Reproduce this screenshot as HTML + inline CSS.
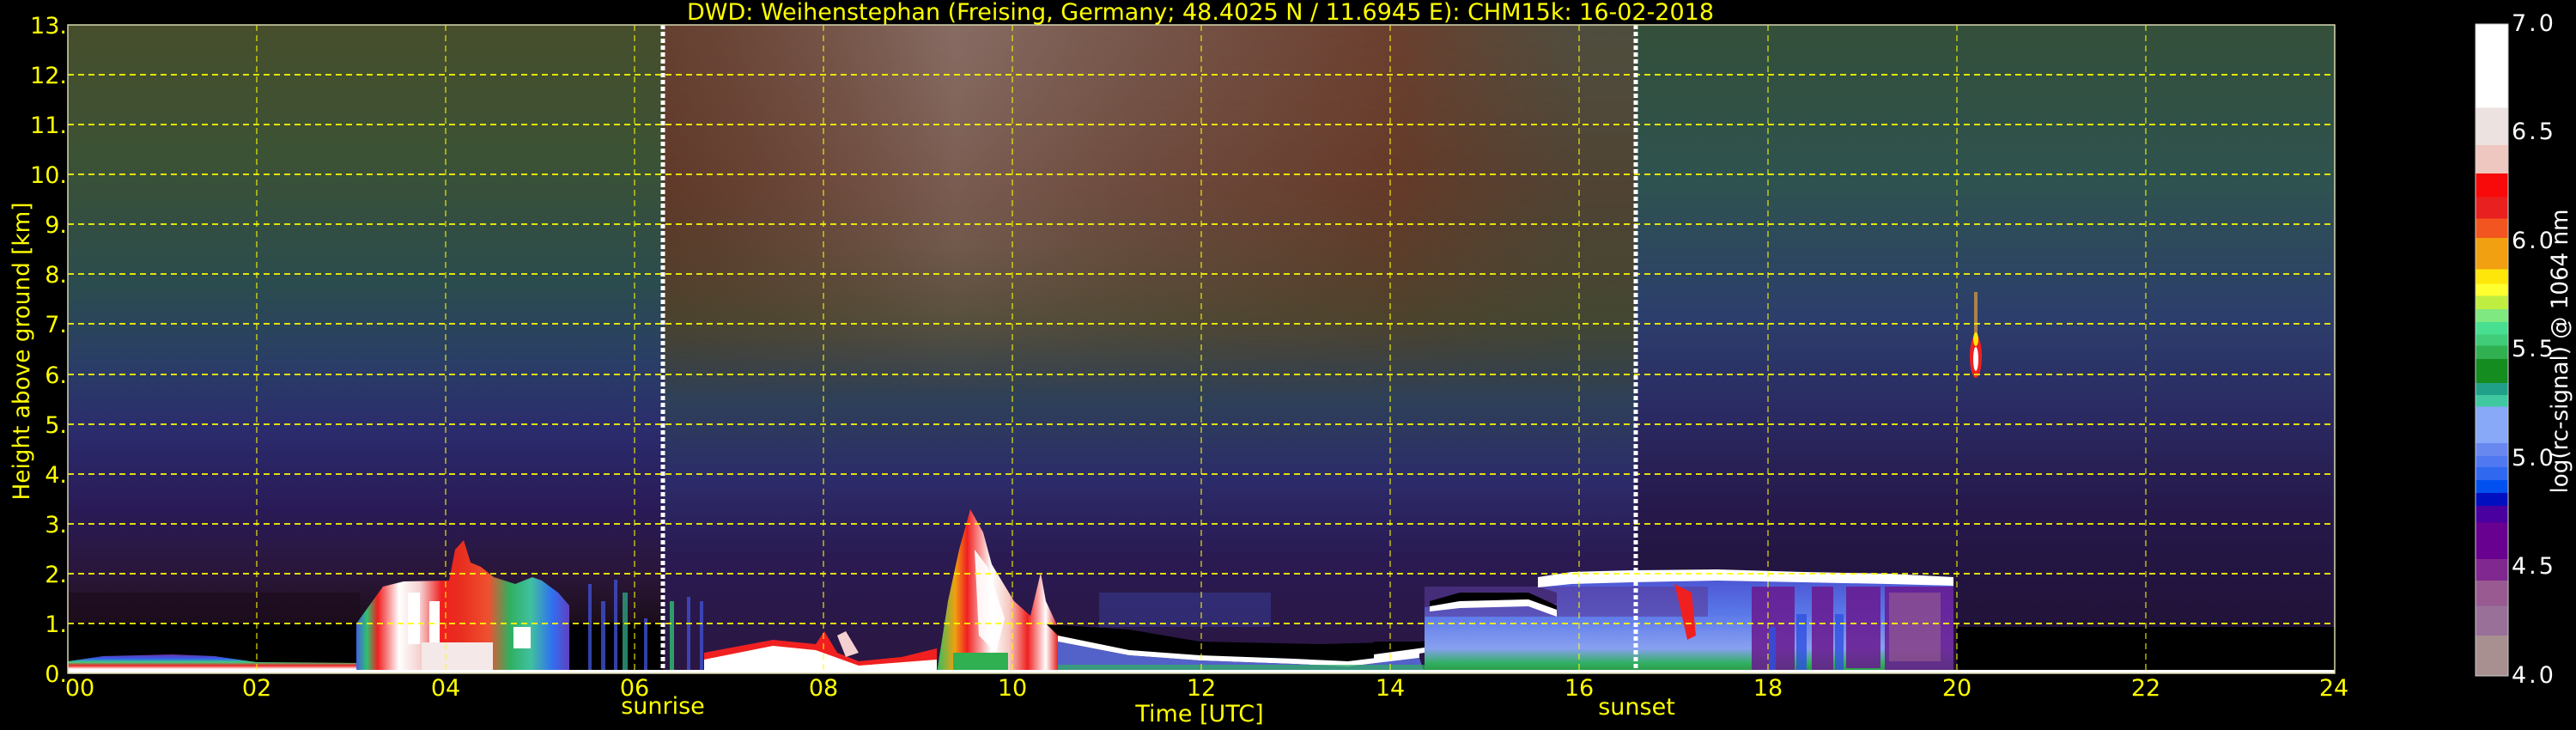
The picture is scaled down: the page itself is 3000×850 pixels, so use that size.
<!DOCTYPE html>
<html><head><meta charset="utf-8"><style>
html,body{margin:0;padding:0;background:#000;}
svg{display:block;}
text{font-family:"DejaVu Sans","Liberation Sans",sans-serif;}
</style></head><body>
<svg width="3000" height="850" viewBox="0 0 3000 850" xmlns="http://www.w3.org/2000/svg">
<defs>
<linearGradient id="gL" x1="0" y1="29" x2="0" y2="784" gradientUnits="userSpaceOnUse">
<stop offset="0" stop-color="#464e2c"/><stop offset="0.2" stop-color="#3c5234"/><stop offset="0.4" stop-color="#2b4c4e"/>
<stop offset="0.52" stop-color="#2a3e66"/><stop offset="0.63" stop-color="#2b2b6c"/><stop offset="0.75" stop-color="#291a56"/>
<stop offset="0.85" stop-color="#2a1638"/><stop offset="0.92" stop-color="#1c0e1c"/><stop offset="0.925" stop-color="#000"/><stop offset="1" stop-color="#000"/>
</linearGradient>
<linearGradient id="gM" x1="0" y1="29" x2="0" y2="784" gradientUnits="userSpaceOnUse">
<stop offset="0" stop-color="#6e4a3c"/><stop offset="0.25" stop-color="#603a2a"/><stop offset="0.45" stop-color="#46452e"/>
<stop offset="0.58" stop-color="#2e4058"/><stop offset="0.7" stop-color="#2c2c6a"/><stop offset="0.82" stop-color="#2a1a52"/><stop offset="1" stop-color="#2a1640"/>
</linearGradient>
<linearGradient id="gMh" x1="772" y1="0" x2="1905" y2="0" gradientUnits="userSpaceOnUse">
<stop offset="0" stop-color="#603828" stop-opacity="0.6"/><stop offset="0.3" stop-color="#8a7068" stop-opacity="0.9"/>
<stop offset="0.5" stop-color="#7a5a50" stop-opacity="0.7"/><stop offset="0.75" stop-color="#6a3a28" stop-opacity="0.7"/>
<stop offset="0.95" stop-color="#3a5040" stop-opacity="0.6"/><stop offset="1" stop-color="#3a5040" stop-opacity="0.6"/>
</linearGradient>
<linearGradient id="fade" x1="0" y1="0" x2="0" y2="1"><stop offset="0" stop-color="#fff"/><stop offset="0.6" stop-color="#fff" stop-opacity="0.6"/><stop offset="1" stop-color="#fff" stop-opacity="0"/></linearGradient>
<mask id="mk"><rect x="772" y="29" width="1133" height="430" fill="url(#fade)"/></mask>
<linearGradient id="gR" x1="0" y1="29" x2="0" y2="784" gradientUnits="userSpaceOnUse">
<stop offset="0" stop-color="#34503a"/><stop offset="0.25" stop-color="#2e5250"/><stop offset="0.45" stop-color="#2c3e6c"/>
<stop offset="0.6" stop-color="#2a2a62"/><stop offset="0.75" stop-color="#26184a"/><stop offset="1" stop-color="#1e1030"/>
</linearGradient>
<linearGradient id="low" x1="0" y1="0" x2="0" y2="1">
<stop offset="0" stop-color="#7030a0"/><stop offset="0.25" stop-color="#3060f0"/><stop offset="0.45" stop-color="#40d080"/><stop offset="0.65" stop-color="#f02020"/><stop offset="0.85" stop-color="#fff"/><stop offset="1" stop-color="#fff"/>
</linearGradient>
<linearGradient id="aer" x1="0" y1="0" x2="1" y2="0">
<stop offset="0" stop-color="#4060e0"/><stop offset="0.05" stop-color="#30c070"/><stop offset="0.1" stop-color="#f02020"/>
<stop offset="0.2" stop-color="#fff"/><stop offset="0.3" stop-color="#f5d0d0"/><stop offset="0.4" stop-color="#f02020"/>
<stop offset="0.5" stop-color="#e83020"/><stop offset="0.62" stop-color="#f05030"/><stop offset="0.72" stop-color="#30b060"/>
<stop offset="0.82" stop-color="#40c0a0"/><stop offset="0.92" stop-color="#3070f0"/><stop offset="1" stop-color="#6040c0"/>
</linearGradient>
<linearGradient id="plume" x1="0" y1="0" x2="1" y2="0">
<stop offset="0" stop-color="#30c060"/><stop offset="0.15" stop-color="#f0a010"/><stop offset="0.25" stop-color="#f02020"/>
<stop offset="0.45" stop-color="#fff"/><stop offset="0.6" stop-color="#f5c8c0"/><stop offset="0.75" stop-color="#f02020"/><stop offset="0.9" stop-color="#fff"/><stop offset="1" stop-color="#e82020"/>
</linearGradient>
<linearGradient id="blu" x1="0" y1="0" x2="0" y2="1">
<stop offset="0" stop-color="#4a50d0"/><stop offset="0.4" stop-color="#5a78e8"/><stop offset="0.75" stop-color="#88a0f0"/><stop offset="0.9" stop-color="#30b060"/><stop offset="1" stop-color="#2a9040"/>
</linearGradient>
<linearGradient id="cb" x1="0" y1="0" x2="0" y2="1">
<stop offset="0" stop-color="#fff"/><stop offset="0.1286" stop-color="#fff"/>
<stop offset="0.1286" stop-color="#ece2e0"/><stop offset="0.1857" stop-color="#ece2e0"/>
<stop offset="0.1857" stop-color="#eec8c0"/><stop offset="0.2293" stop-color="#eec8c0"/>
<stop offset="0.2293" stop-color="#f80a0a"/><stop offset="0.2657" stop-color="#f80a0a"/>
<stop offset="0.2657" stop-color="#e82020"/><stop offset="0.2986" stop-color="#e82020"/>
<stop offset="0.2986" stop-color="#f25520"/><stop offset="0.3279" stop-color="#f25520"/>
<stop offset="0.3279" stop-color="#f0a010"/><stop offset="0.3764" stop-color="#f0a010"/>
<stop offset="0.3764" stop-color="#ffe60a"/><stop offset="0.3986" stop-color="#ffe60a"/>
<stop offset="0.3986" stop-color="#ffff30"/><stop offset="0.4171" stop-color="#ffff30"/>
<stop offset="0.4171" stop-color="#c0ee40"/><stop offset="0.4371" stop-color="#c0ee40"/>
<stop offset="0.4371" stop-color="#80e880"/><stop offset="0.4571" stop-color="#80e880"/>
<stop offset="0.4571" stop-color="#48e090"/><stop offset="0.4764" stop-color="#48e090"/>
<stop offset="0.4764" stop-color="#40cc78"/><stop offset="0.4936" stop-color="#40cc78"/>
<stop offset="0.4936" stop-color="#30b050"/><stop offset="0.5136" stop-color="#30b050"/>
<stop offset="0.5136" stop-color="#158c20"/><stop offset="0.5507" stop-color="#158c20"/>
<stop offset="0.5507" stop-color="#20a088"/><stop offset="0.5693" stop-color="#20a088"/>
<stop offset="0.5693" stop-color="#40c8a0"/><stop offset="0.5871" stop-color="#40c8a0"/>
<stop offset="0.5871" stop-color="#88a8f8"/><stop offset="0.6429" stop-color="#88a8f8"/>
<stop offset="0.6429" stop-color="#6888f0"/><stop offset="0.6629" stop-color="#6888f0"/>
<stop offset="0.6629" stop-color="#5078f0"/><stop offset="0.68" stop-color="#5078f0"/>
<stop offset="0.68" stop-color="#3068f0"/><stop offset="0.6993" stop-color="#3068f0"/>
<stop offset="0.6993" stop-color="#0050f0"/><stop offset="0.7193" stop-color="#0050f0"/>
<stop offset="0.7193" stop-color="#0010c0"/><stop offset="0.7393" stop-color="#0010c0"/>
<stop offset="0.7393" stop-color="#4a00a0"/><stop offset="0.765" stop-color="#4a00a0"/>
<stop offset="0.765" stop-color="#680090"/><stop offset="0.8207" stop-color="#680090"/>
<stop offset="0.8207" stop-color="#802890"/><stop offset="0.8536" stop-color="#802890"/>
<stop offset="0.8536" stop-color="#985a90"/><stop offset="0.8929" stop-color="#985a90"/>
<stop offset="0.8929" stop-color="#987098"/><stop offset="0.9379" stop-color="#987098"/>
<stop offset="0.9379" stop-color="#a89090"/><stop offset="1" stop-color="#a89090"/>
</linearGradient>
</defs>

<rect x="79" y="29" width="693" height="755" fill="url(#gL)"/>
<rect x="772" y="29" width="1133" height="755" fill="url(#gM)"/>
<rect x="772" y="29" width="1133" height="430" fill="url(#gMh)" mask="url(#mk)"/>
<rect x="1905" y="29" width="814" height="755" fill="url(#gR)"/>
<rect x="79" y="726" width="340" height="58" fill="#000"/>
<rect x="2279" y="730" width="440" height="54" fill="#000"/>
<rect x="79" y="690" width="340" height="36" fill="#1c0c1c" opacity="0.6"/>

<polygon points="79,770 120,764 200,762 250,764 299,771 420,772 420,782 79,782" fill="url(#low)"/>

<polygon points="415,726 446,683 470,677 523,676 530,640 540,629 548,655 560,660 575,672 600,680 620,672 631,676 650,690 663,705 663,784 415,784" fill="url(#aer)"/>
<rect x="475" y="690" width="14" height="60" fill="#fff"/>
<rect x="500" y="700" width="12" height="80" fill="#fff"/>
<rect x="598" y="730" width="20" height="25" fill="#fff"/>
<rect x="491" y="748" width="83" height="34" fill="#f5e8e8"/>

<g fill="#4050d0" opacity="0.8">
<rect x="685" y="680" width="4" height="104"/><rect x="700" y="700" width="5" height="84"/><rect x="715" y="675" width="4" height="109"/>
<rect x="725" y="690" width="6" height="94" fill="#30a080"/><rect x="750" y="720" width="4" height="64"/><rect x="780" y="700" width="5" height="84" fill="#30c070"/>
<rect x="800" y="695" width="4" height="89"/><rect x="815" y="700" width="4" height="84"/>
</g>
<polygon points="820,760 900,745 950,750 960,735 975,760 1000,770 1050,765 1091,755 1091,784 820,784" fill="#f02020"/>
<polygon points="820,768 900,752 950,757 1000,775 1091,768 1091,784 820,784" fill="#fff"/>
<polygon points="975,740 985,735 1000,760 985,765" fill="#f5d0d0"/>

<polygon points="1091,784 1104,700 1117,640 1130,593 1145,620 1155,657 1181,700 1200,717 1212,667 1218,700 1232,730 1232,784" fill="url(#plume)"/>
<rect x="1110" y="760" width="64" height="22" fill="#30b050"/>
<polygon points="1135,640 1150,660 1170,720 1160,760 1140,740" fill="#fff" opacity="0.9"/>

<polygon points="1219,727 1315,733 1397,747 1538,750 1653,747 1653,760 1570,770 1506,767 1397,763 1315,757 1232,740" fill="#000"/>
<polygon points="1232,740 1315,757 1397,763 1506,767 1570,770 1653,760 1653,766 1570,776 1506,773 1397,769 1315,763 1232,747" fill="#fff"/>
<polygon points="1232,747 1315,763 1397,769 1506,773 1570,776 1653,766 1659,784 1232,784" fill="#5a70e0" opacity="0.85"/>
<rect x="1232" y="774" width="427" height="10" fill="#30b060" opacity="0.7"/>
<rect x="1280" y="690" width="200" height="40" fill="#4050c0" opacity="0.35"/>

<polygon points="1659,760 1659,707 1700,703 1813,703 1813,690 1791,683 1830,672 1900,670 2000,668 2100,670 2200,672 2275,676 2275,784 1659,784" fill="url(#blu)"/>
<rect x="1659" y="683" width="330" height="35" fill="#5a3a9a" opacity="0.6"/>
<g fill="#6a1a90" opacity="0.85">
<rect x="2040" y="683" width="50" height="101"/><rect x="2110" y="683" width="25" height="101"/><rect x="2150" y="683" width="40" height="95"/><rect x="2195" y="683" width="80" height="101"/>
</g>
<g fill="#3050e0" opacity="0.8">
<rect x="2092" y="715" width="12" height="69"/><rect x="2137" y="715" width="10" height="69"/><rect x="2060" y="730" width="8" height="54"/>
</g>
<rect x="2200" y="690" width="60" height="80" fill="#986090" opacity="0.6"/>
<polygon points="1950,680 1970,690 1975,740 1965,745 1955,700" fill="#f02020"/>
<polygon points="1600,747 1659,747 1659,760 1620,762 1600,764" fill="#000"/>
<polygon points="1659,760 1620,766 1600,768 1600,762 1659,754" fill="#fff"/>
<polygon points="1665,700 1700,690 1780,690 1813,705 1813,710 1780,698 1700,700 1665,706" fill="#000"/>
<polygon points="1665,706 1700,700 1780,698 1813,710 1813,718 1780,706 1700,708 1665,712" fill="#fff"/>
<polygon points="1791,672 1830,666 1900,664 2000,663 2100,666 2200,668 2275,672 2275,682 2200,680 2100,678 2000,676 1900,678 1830,680 1791,684" fill="#fff"/>

<rect x="2299" y="340" width="4" height="60" fill="#e0a040" opacity="0.7"/>
<ellipse cx="2301" cy="415" rx="7" ry="25" fill="#f02020"/>
<ellipse cx="2301" cy="418" rx="3" ry="14" fill="#fff"/>
<ellipse cx="2301" cy="395" rx="3" ry="8" fill="#ffe60a"/>

<rect x="79" y="780" width="2640" height="4" fill="#fff"/>

<g stroke="#ffff00" stroke-width="2" stroke-dasharray="7,5" opacity="0.85">
<line x1="79" y1="726" x2="2719" y2="726"/><line x1="79" y1="668" x2="2719" y2="668"/><line x1="79" y1="610" x2="2719" y2="610"/>
<line x1="79" y1="552" x2="2719" y2="552"/><line x1="79" y1="494" x2="2719" y2="494"/><line x1="79" y1="436" x2="2719" y2="436"/>
<line x1="79" y1="377" x2="2719" y2="377"/><line x1="79" y1="319" x2="2719" y2="319"/><line x1="79" y1="261" x2="2719" y2="261"/>
<line x1="79" y1="203" x2="2719" y2="203"/><line x1="79" y1="145" x2="2719" y2="145"/><line x1="79" y1="87" x2="2719" y2="87"/>
</g>
<g stroke="#ffff00" stroke-width="1.5" stroke-dasharray="7,5" opacity="0.7">
<line x1="299" y1="29" x2="299" y2="784"/><line x1="519" y1="29" x2="519" y2="784"/><line x1="739" y1="29" x2="739" y2="784"/>
<line x1="959" y1="29" x2="959" y2="784"/><line x1="1179" y1="29" x2="1179" y2="784"/><line x1="1399" y1="29" x2="1399" y2="784"/>
<line x1="1619" y1="29" x2="1619" y2="784"/><line x1="1839" y1="29" x2="1839" y2="784"/><line x1="2059" y1="29" x2="2059" y2="784"/>
<line x1="2279" y1="29" x2="2279" y2="784"/><line x1="2499" y1="29" x2="2499" y2="784"/>
</g>
<line x1="772" y1="29" x2="772" y2="784" stroke="#fff" stroke-width="5" stroke-dasharray="5,3"/>
<line x1="1905" y1="29" x2="1905" y2="784" stroke="#fff" stroke-width="5" stroke-dasharray="5,3"/>
<rect x="79" y="29" width="2640" height="755" fill="none" stroke="#d8d8b0" stroke-width="1.5"/>

<g fill="#ffff00" font-size="27" text-anchor="end">
<text x="78" y="794">0.</text><text x="78" y="736">1.</text><text x="78" y="678">2.</text><text x="78" y="620">3.</text>
<text x="78" y="562">4.</text><text x="78" y="504">5.</text><text x="78" y="446">6.</text><text x="78" y="387">7.</text>
<text x="78" y="329">8.</text><text x="78" y="271">9.</text><text x="78" y="213">10.</text><text x="78" y="155">11.</text>
<text x="78" y="97">12.</text><text x="78" y="39">13.</text>
</g>
<text transform="translate(34,409) rotate(-90)" fill="#ffff00" font-size="27" text-anchor="middle" textLength="347" lengthAdjust="spacingAndGlyphs">Height above ground [km]</text>
<g fill="#ffff00" font-size="27" text-anchor="middle">
<text x="93" y="810">00</text><text x="299" y="810">02</text><text x="519" y="810">04</text><text x="739" y="810">06</text>
<text x="959" y="810">08</text><text x="1179" y="810">10</text><text x="1399" y="810">12</text><text x="1619" y="810">14</text>
<text x="1839" y="810">16</text><text x="2059" y="810">18</text><text x="2279" y="810">20</text><text x="2499" y="810">22</text>
<text x="2718" y="810">24</text>
<text x="772" y="831">sunrise</text><text x="1906" y="832">sunset</text>
<text x="1397" y="840">Time [UTC]</text>
</g>
<text x="800" y="23" fill="#ffff00" font-size="27" textLength="1196" lengthAdjust="spacingAndGlyphs">DWD: Weihenstephan (Freising, Germany; 48.4025 N / 11.6945 E):    CHM15k: 16-02-2018</text>

<rect x="2883" y="28" width="38" height="759" fill="url(#cb)" stroke="#ccc" stroke-width="1"/>
<g fill="#fff" font-size="27" letter-spacing="3">
<text x="2925" y="36">7.0</text><text x="2925" y="162">6.5</text><text x="2925" y="289">6.0</text>
<text x="2925" y="415">5.5</text><text x="2925" y="542">5.0</text><text x="2925" y="668">4.5</text><text x="2925" y="795">4.0</text>
</g>
<text transform="translate(2990,409) rotate(-90)" fill="#fff" font-size="27" text-anchor="middle" textLength="331" lengthAdjust="spacingAndGlyphs">log(rc-signal) @ 1064 nm</text>
</svg>
</body></html>
